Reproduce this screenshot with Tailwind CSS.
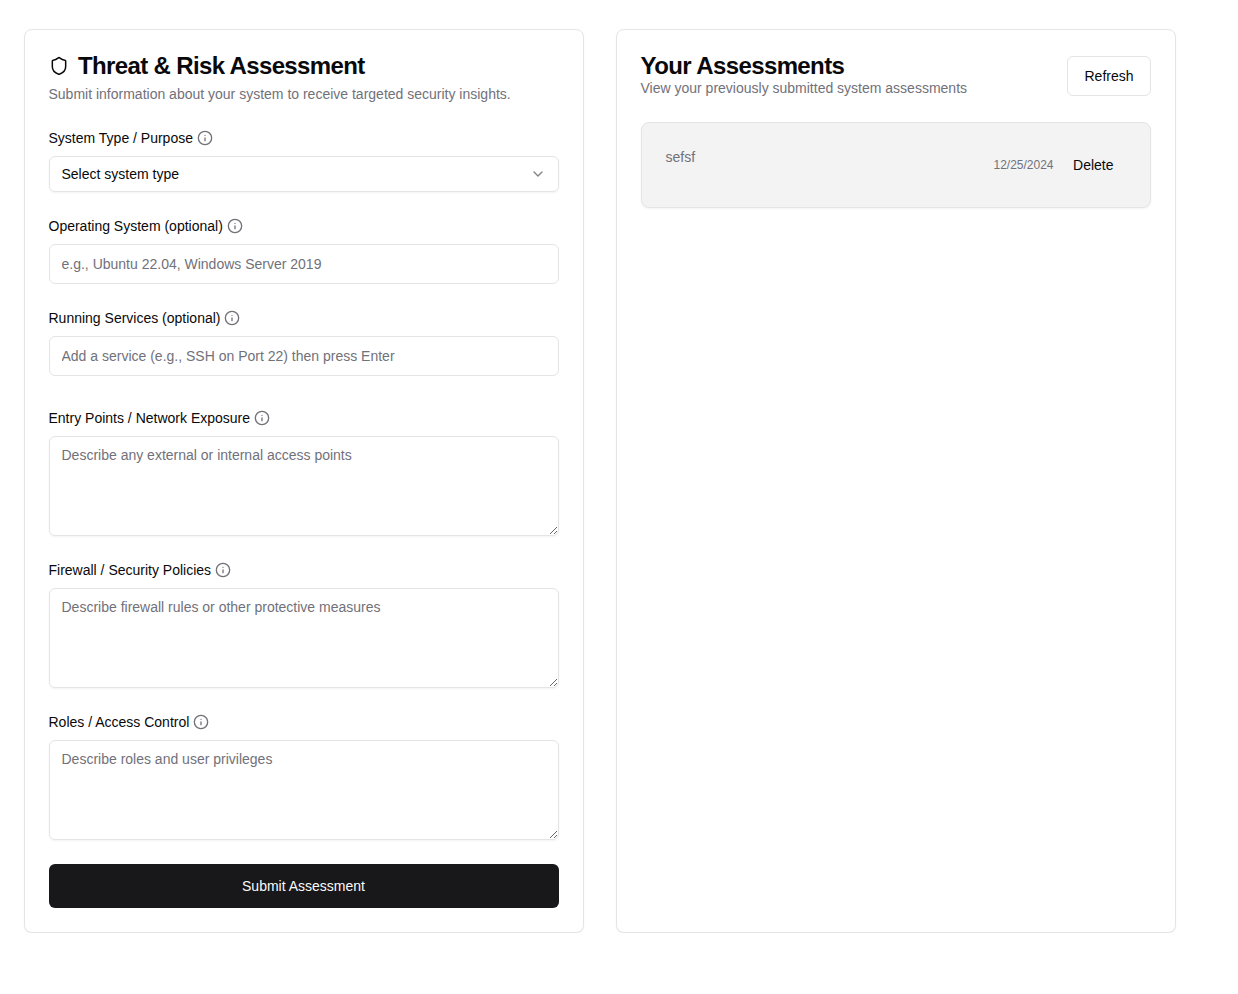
<!DOCTYPE html>
<html lang="en">
<head>
<meta charset="utf-8">
<title>Threat &amp; Risk Assessment</title>
<script src="https://cdn.jsdelivr.net/npm/@tailwindcss/browser@4"></script>
</head>
<body class="bg-white text-[#09090b] font-['Liberation_Sans',Arial,sans-serif] text-sm">
<svg class="hidden">
<symbol id="info" viewBox="0 0 24 24"><circle cx="12" cy="12" r="10"/><path d="M12 16v-4"/><path d="M12 8h.01"/></symbol>
</svg>
<main class="grid w-[1200px] grid-cols-2 gap-8 px-6 pt-[29px]">
<section class="h-[904px] rounded-lg border border-[#e4e4e7] bg-white px-6 shadow-xs">
<h1 class="mt-6 flex h-6 items-center gap-[9px] text-2xl leading-6 font-semibold tracking-[-0.64px]">
<svg class="size-5 fill-none stroke-current stroke-[1.8]" stroke-linecap="round" stroke-linejoin="round" viewBox="0 0 24 24"><path d="M20 13c0 5-3.500 7.500-7.660 8.950a1 1 0 0 1-.67-.01C7.500 20.500 4 18 4 13V6a1 1 0 0 1 1-1c2 0 4.500-1.200 6.240-2.720a1.170 1.170 0 0 1 1.520 0C14.510 3.810 17 5 19 5a1 1 0 0 1 1 1z"/></svg>
Threat &amp; Risk Assessment</h1>
<p class="mt-1.5 -ml-[0.5px] text-[#71717a]">Submit information about your system to receive targeted security insights.</p>
<form class="mt-6">
<div class="h-[88px]">
<label class="-ml-[0.5px] flex h-5 items-center gap-1 font-medium">System Type / Purpose <svg class="size-4 fill-none stroke-[#71717a] stroke-2" stroke-linecap="round" stroke-linejoin="round"><use href="#info"/></svg></label>
<button type="button" class="mt-2 flex h-9 w-full items-center justify-between rounded-md border border-[#e4e4e7] pr-3 pl-[11.5px] shadow-xs">Select system type <svg class="size-4 fill-none stroke-current stroke-2 opacity-50" stroke-linecap="round" stroke-linejoin="round" viewBox="0 0 24 24"><path d="m6 9 6 6 6-6"/></svg></button>
</div>
<div class="h-[92px]">
<label class="-ml-[0.5px] flex h-5 items-center gap-1 font-medium">Operating System (optional) <svg class="size-4 fill-none stroke-[#71717a] stroke-2" stroke-linecap="round" stroke-linejoin="round"><use href="#info"/></svg></label>
<input class="mt-2 block h-10 w-full rounded-md border border-[#e4e4e7] px-[11.5px] placeholder:text-[#71717a]" placeholder="e.g., Ubuntu 22.04, Windows Server 2019">
</div>
<div class="h-[100px]">
<label class="-ml-[0.5px] flex h-5 items-center gap-[3.5px] font-medium">Running Services (optional) <svg class="size-4 fill-none stroke-[#71717a] stroke-2" stroke-linecap="round" stroke-linejoin="round"><use href="#info"/></svg></label>
<input class="mt-2 block h-10 w-full rounded-md border border-[#e4e4e7] px-[11.5px] placeholder:text-[#71717a]" placeholder="Add a service (e.g., SSH on Port 22) then press Enter">
</div>
<div class="h-[152px]">
<label class="-ml-[0.5px] flex h-5 items-center gap-[3.5px] font-medium">Entry Points / Network Exposure <svg class="size-4 fill-none stroke-[#71717a] stroke-2" stroke-linecap="round" stroke-linejoin="round"><use href="#info"/></svg></label>
<textarea class="mt-2 block h-[100px] w-full rounded-md border border-[#e4e4e7] px-[11.5px] py-2 shadow-xs placeholder:text-[#71717a]" placeholder="Describe any external or internal access points"></textarea>
</div>
<div class="h-[152px]">
<label class="-ml-[0.5px] flex h-5 items-center gap-[3.5px] font-medium">Firewall / Security Policies <svg class="size-4 fill-none stroke-[#71717a] stroke-2" stroke-linecap="round" stroke-linejoin="round"><use href="#info"/></svg></label>
<textarea class="mt-2 block h-[100px] w-full rounded-md border border-[#e4e4e7] px-[11.5px] py-2 shadow-xs placeholder:text-[#71717a]" placeholder="Describe firewall rules or other protective measures"></textarea>
</div>
<div class="h-[152px]">
<label class="-ml-[0.5px] flex h-5 items-center gap-[3.5px] font-medium">Roles / Access Control <svg class="size-4 fill-none stroke-[#71717a] stroke-2" stroke-linecap="round" stroke-linejoin="round"><use href="#info"/></svg></label>
<textarea class="mt-2 block h-[100px] w-full rounded-md border border-[#e4e4e7] px-[11.5px] py-2 shadow-xs placeholder:text-[#71717a]" placeholder="Describe roles and user privileges"></textarea>
</div>
<button type="button" class="h-11 w-full rounded-md bg-[#18181b] pr-px font-medium text-[#fafafa]">Submit Assessment</button>
</form>
</section>
<section class="h-[904px] rounded-lg border border-[#e4e4e7] bg-white px-6 shadow-xs">
<div class="mt-6 flex h-11 items-center justify-between">
<div class="-ml-[0.5px]">
<h2 class="text-2xl leading-6 font-semibold tracking-tight">Your Assessments</h2>
<p class="text-[#71717a]">View your previously submitted system assessments</p>
</div>
<button type="button" class="h-10 w-[84px] rounded-md border border-[#e4e4e7] font-medium">Refresh</button>
</div>
<div class="mt-6 flex h-[86px] items-center justify-between rounded-lg border border-[#e4e4e7] bg-[#f3f3f4] px-6 shadow-xs">
<p class="mb-4 -ml-[0.5px] text-[#71717a]">sefsf</p>
<div class="flex items-center gap-2">
<span class="text-xs text-[#71717a]">12/25/2024</span>
<button type="button" class="h-9 pr-[12.5px] pl-[11.5px] font-medium">Delete</button>
</div>
</div>
</section>
</main>
</body>
</html>
